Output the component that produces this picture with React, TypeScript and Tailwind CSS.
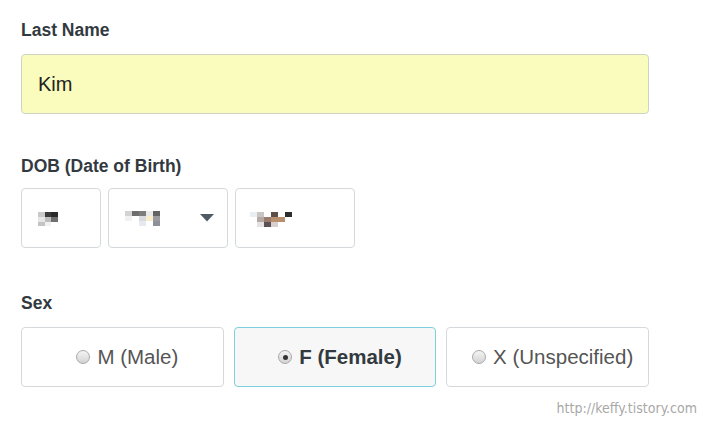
import React from 'react';

type Px = [number, number, number, number, string];

// blurred placeholder blocks inside the DOB fields
const Pixels: React.FC<{ cells: Px[]; w: number; h: number }> = ({ cells, w, h }) => (
  <svg width={w} height={h} viewBox={`0 0 ${w} ${h}`}>
    {cells.map(([x, y, cw, ch, c], i) => (
      <rect key={i} x={x} y={y} width={cw} height={ch} fill={c} />
    ))}
  </svg>
);

const dayCells: Px[] = [
  [0, 0, 7, 5, '#c9c9c9'],
  [7, 0, 6, 5, '#3c3c3c'],
  [13, 0, 7, 5, '#2a2a2a'],
  [0, 5, 7, 5, '#e6e6e6'],
  [7, 5, 6, 5, '#bdbdbd'],
  [13, 5, 7, 5, '#6f6f6f'],
  [0, 10, 7, 4, '#c4c4c4'],
  [7, 10, 6, 4, '#f1f1f1'],
];

const monthCells: Px[] = [
  [0, 0, 7, 5, '#d3d3d3'],
  [7, 0, 7, 5, '#6d6d6d'],
  [14, 0, 7, 5, '#7c7c7c'],
  [21, 0, 7, 5, '#e9e9e9'],
  [28, 0, 7, 5, '#626262'],
  [0, 5, 7, 5, '#f1f1f1'],
  [14, 5, 7, 5, '#d8dbe0'],
  [21, 5, 7, 5, '#f8eccc'],
  [28, 5, 7, 5, '#9a9aa0'],
  [14, 10, 7, 5, '#e7e9ee'],
  [28, 10, 7, 5, '#8e9098'],
];

const yearCells: Px[] = [
  [0, 0, 7, 5, '#e9eef2'],
  [7, 0, 7, 5, '#c8c5c5'],
  [21, 0, 7, 5, '#5d4e48'],
  [35, 0, 7, 5, '#2e2e2e'],
  [7, 5, 7, 5, '#b5a9a6'],
  [14, 5, 7, 5, '#9b7b6b'],
  [21, 5, 14, 5, '#b8906e'],
  [7, 10, 7, 5, '#e5e2e2'],
  [14, 10, 7, 5, '#5c5054'],
  [21, 10, 7, 5, '#d8cfcf'],
];

const Label: React.FC<{ children: React.ReactNode }> = ({ children }) => (
  <div className="text-[17.5px] font-bold leading-[20px] text-[#333a3f]">{children}</div>
);

const Radio: React.FC<{ checked?: boolean }> = ({ checked }) => (
  <span className="relative inline-block h-[14px] w-[14px] rounded-full border border-[#a9a9a9] bg-gradient-to-b from-[#f4f4f4] to-[#d3d3d3]">
    {checked && (
      <span className="absolute left-[3.5px] top-[3.5px] h-[5px] w-[5px] rounded-full bg-[#333]" />
    )}
  </span>
);

const options = [
  { label: 'M (Male)', checked: false },
  { label: 'F (Female)', checked: true },
  { label: 'X (Unspecified)', checked: false },
];

export default function App() {
  return (
    <div
      className="relative h-[430px] w-[712px] bg-white px-[21px] pt-[20px]"
      style={{ fontFamily: '"Liberation Sans", Arial, sans-serif' }}
    >
      <Label>Last Name</Label>
      <div className="mt-[14px] flex h-[60px] w-[628px] items-center rounded-[4px] border border-[#cfd3c4] bg-[#f9fcbd] pl-[16px] text-[20px] text-[#222]">
        Kim
      </div>

      <div className="mt-[42px]">
        <Label>DOB (Date of Birth)</Label>
      </div>
      <div className="mt-[12px] flex gap-[7px]">
        <div className="flex h-[60px] w-[80px] items-center rounded-[4px] border border-[#d6d9dc] pl-[16px] pt-[2px]">
          <Pixels cells={dayCells} w={20} h={14} />
        </div>
        <div className="flex h-[60px] w-[120px] items-center justify-between rounded-[4px] border border-[#d6d9dc] pl-[16px] pr-[13px]">
          <Pixels cells={monthCells} w={35} h={15} />
          <svg width="14" height="8" viewBox="0 0 14 8">
            <path d="M0 0 H14 L7 7.5 Z" fill="#4f5a62" />
          </svg>
        </div>
        <div className="flex h-[60px] w-[120px] items-center rounded-[4px] border border-[#d6d9dc] pl-[14px] pt-[2px]">
          <Pixels cells={yearCells} w={42} h={15} />
        </div>
      </div>

      <div className="mt-[45px]">
        <Label>Sex</Label>
      </div>
      <div className="mt-[14px] grid w-[628px] grid-cols-3 gap-[10px]">
        {options.map((o) => (
          <div
            key={o.label}
            className={
              o.checked
                ? 'flex h-[60px] items-center justify-center gap-[7px] rounded-[4px] border border-[#7dd0dc] bg-[#f7f7f7] pl-[10px]'
                : 'flex h-[60px] items-center justify-center gap-[7px] rounded-[4px] border border-[#d6d9dc] bg-white pl-[10px]'
            }
          >
            <Radio checked={o.checked} />
            <span
              className={
                o.checked
                  ? 'text-[20.5px] font-bold text-[#333a3f]'
                  : 'text-[20.5px] text-[#555]'
              }
            >
              {o.label}
            </span>
          </div>
        ))}
      </div>

      <div
        className="mt-[11px] w-[676px] text-right text-[14px] text-[#a8a8a8]"
        style={{ fontFamily: '"DejaVu Sans Condensed", "DejaVu Sans", sans-serif' }}
      >
        http://keffy.tistory.com
      </div>
    </div>
  );
}
